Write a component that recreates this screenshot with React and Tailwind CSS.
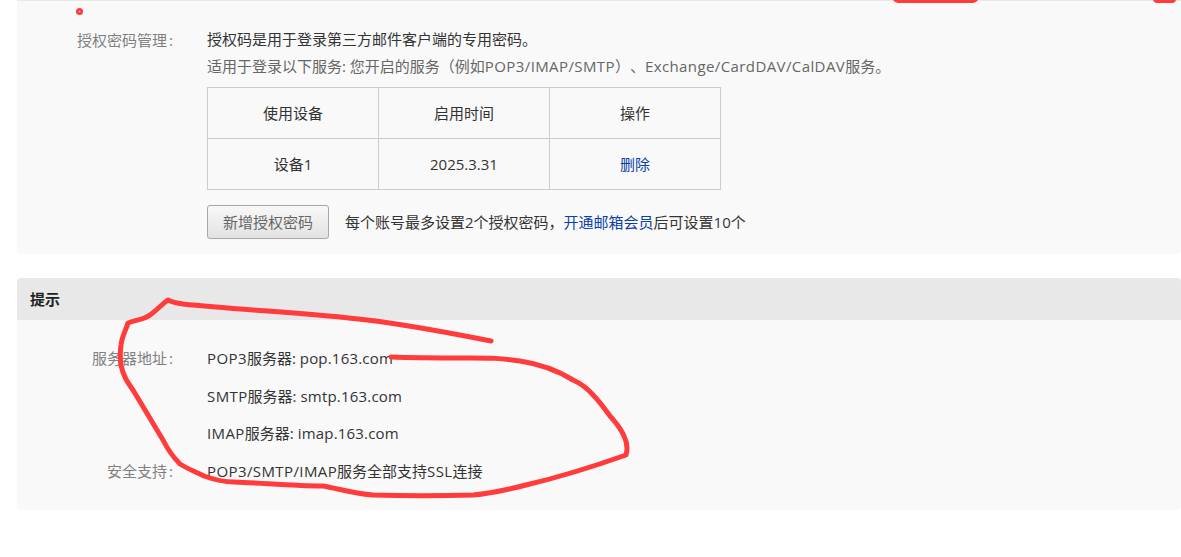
const FONT = "font-['Open_Sans','Noto_Sans_CJK_SC',sans-serif]";

const DEVICES = [{ name: '设备1', date: '2025.3.31' }];

const SERVERS = [
  { label: '服务器地址', latin: 'POP3', rest: '服务器: ', host: 'pop.163.com' },
  { label: '', latin: 'SMTP', rest: '服务器: ', host: 'smtp.163.com' },
  { label: '', latin: 'IMAP', rest: '服务器: ', host: 'imap.163.com' },
];

// Latin runs in the reference are set a bit wider than Open Sans
function Latin({ children }) {
  return <span className="tracking-[0.4px]">{children}</span>;
}

function Host({ children }) {
  return <span className="tracking-[0.2px]">{children}</span>;
}

function Label({ children }) {
  return (
    <div className="w-[156px] shrink-0 text-right leading-[26px] text-[#808080]">
      {children}
      {children && <span className="pl-[2px]">:</span>}
    </div>
  );
}

function Scribble() {
  return (
    <svg className="pointer-events-none absolute left-0 top-0" width="1181" height="557" fill="none">
      <path
        d="M491 341 C450 333 410 325 367 320 C310 313 240 310 183 304 C176 303 172 302 168 300 C162 304 156 311 150 315 C143 320 135 320 128 323 C126 330 122 336 121 345 C120 352 120 358 121 365 C123 376 128 383 133 390 L163 440 C168 450 172 456 180 464 C188 469 196 472 204 476 C215 480 224 482 234 482 C262 483 295 486 323 486 C340 489 355 494 373 495 C405 496 440 496 473 495 C495 493 510 489 526 485 C560 477 595 466 626 455 C628 448 627 442 624 436 C620 427 616 423 610 416 C604 408 600 402 594 396 C588 389 580 383 573 380 C560 372 540 364 520 361 C500 358 490 358 470 358 C440 358 415 358 391 357"
        stroke="#ff3b3b"
        strokeWidth="5"
        strokeLinecap="round"
        strokeLinejoin="round"
      />
      <circle cx="79.5" cy="11.5" r="3.5" fill="#ff3b3b" />
      <circle cx="79.5" cy="11.5" r="0.8" fill="#ffd0d0" />
      <path d="M893 0 H978 Q976 3 973 3 H898 Q895 3 893 0 Z" fill="#ff3b3b" />
      <path d="M1153 0 H1176 Q1175 3 1172 3 H1157 Q1154 3 1153 0 Z" fill="#ff3b3b" />
    </svg>
  );
}

export default function App() {
  return (
    <div className={`relative h-[557px] w-[1181px] overflow-hidden bg-white text-[15px] text-[#333] [text-spacing-trim:space-all] ${FONT}`}>
      <div className="ml-[17px] rounded-b-[4px] border-t border-[#e8e8e8] bg-[#f9f9f9] pb-[15px] pt-[26px]">
        <div className="flex">
          <Label>授权密码管理</Label>
          <div className="ml-[34px]">
            <div className="h-[26px] leading-[25px]">授权码是用于登录第三方邮件客户端的专用密码。</div>
            <div className="h-[26px] whitespace-nowrap leading-[26px] text-[#666]">
              适用于登录以下服务: 您开启的服务（例如<Latin>POP3/IMAP/SMTP</Latin>）、<Latin>Exchange/CardDAV/CalDAV</Latin>服务。
            </div>
            <table className="mt-2 w-[514px] table-fixed border-collapse text-center">
              <tbody>
                <tr className="h-[51px]">
                  <td className="border border-[#ccc]">使用设备</td>
                  <td className="border border-[#ccc]">启用时间</td>
                  <td className="border border-[#ccc]">操作</td>
                </tr>
                {DEVICES.map((d) => (
                  <tr key={d.name} className="h-[51px]">
                    <td className="border border-[#ccc]">{d.name}</td>
                    <td className="border border-[#ccc]">{d.date}</td>
                    <td className="border border-[#ccc] text-[#0b3ea8]">删除</td>
                  </tr>
                ))}
              </tbody>
            </table>
            <div className="mt-[15px] flex items-center">
              <button className="h-[34px] w-[122px] rounded-[3px] border border-[#a8a8a8] bg-gradient-to-b from-[#f8f8f8] to-[#e2e2e2] text-[#666]">
                新增授权密码
              </button>
              <span className="ml-4">
                每个账号最多设置2个授权密码，<span className="text-[#0b3ea8]">开通邮箱会员</span>后可设置10个
              </span>
            </div>
          </div>
        </div>
      </div>

      <div className="ml-[17px] mt-[24px] rounded-[4px] bg-[#f9f9f9]">
        <div className="h-[42px] rounded-t-[4px] bg-[#e8e8e8] pl-[13px] font-bold leading-[42px] text-[#222]">提示</div>
        <div className="pb-[20.5px] pt-[19.5px]">
          {SERVERS.map((row) => (
            <div key={row.host} className="flex h-[37.5px] items-center">
              <Label>{row.label}</Label>
              <div className="ml-[34px]">
                <Latin>{row.latin}</Latin>
                {row.rest}
                <Host>{row.host}</Host>
              </div>
            </div>
          ))}
          <div className="flex h-[37.5px] items-center">
            <Label>安全支持</Label>
            <div className="ml-[34px]">
              <Latin>POP3/SMTP/IMAP</Latin>服务全部支持<Latin>SSL</Latin>连接
            </div>
          </div>
        </div>
      </div>

      <Scribble />
    </div>
  );
}
